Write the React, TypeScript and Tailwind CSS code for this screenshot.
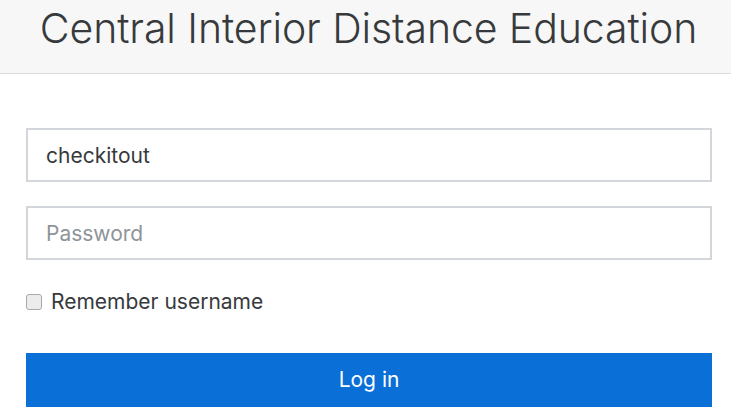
import { useState } from "react";

export default function App() {
  const [username, setUsername] = useState("checkitout");
  const [password, setPassword] = useState("");
  const [remember, setRemember] = useState(false);

  return (
    <div className="min-h-[411px] bg-white font-['Inter',sans-serif] text-[#373a3c]">
      <header className="h-[74px] bg-[#f7f7f7] border-b border-[#dcdcdc] flex items-start justify-center">
        <h1 className="text-[41px] font-light leading-[56px] mt-[0px] tracking-[-0.1px] pl-[6px]">
          Central Interior Distance Education
        </h1>
      </header>
      <form className="pl-[26px] pr-[19px] pt-[54px] flex flex-col" onSubmit={(e) => e.preventDefault()}>
        <input
          type="text"
          value={username}
          onChange={(e) => setUsername(e.target.value)}
          className="h-[54px] border-2 border-[#d3d6da] px-[18px] text-[21px] text-[#373a3c] outline-none"
        />
        <input
          type="password"
          placeholder="Password"
          value={password}
          onChange={(e) => setPassword(e.target.value)}
          className="h-[54px] mt-[24px] border-2 border-[#d3d6da] px-[18px] text-[21px] placeholder:text-[#8e9499] outline-none"
        />
        <label className="flex items-center gap-[9px] mt-[27px] text-[21px] leading-[30px]">
          <input
            type="checkbox"
            checked={remember}
            onChange={(e) => setRemember(e.target.checked)}
            className="appearance-none w-[16px] h-[16px] m-0 rounded-[3px] border border-[#a9a9a9] bg-[#ececec] checked:bg-[#0a6fd6]"
          />
          Remember username
        </label>
        <button
          type="submit"
          className="mt-[36px] h-[54px] bg-[#0a6fd6] text-white text-[21px]"
        >
          Log in
        </button>
      </form>
    </div>
  );
}
